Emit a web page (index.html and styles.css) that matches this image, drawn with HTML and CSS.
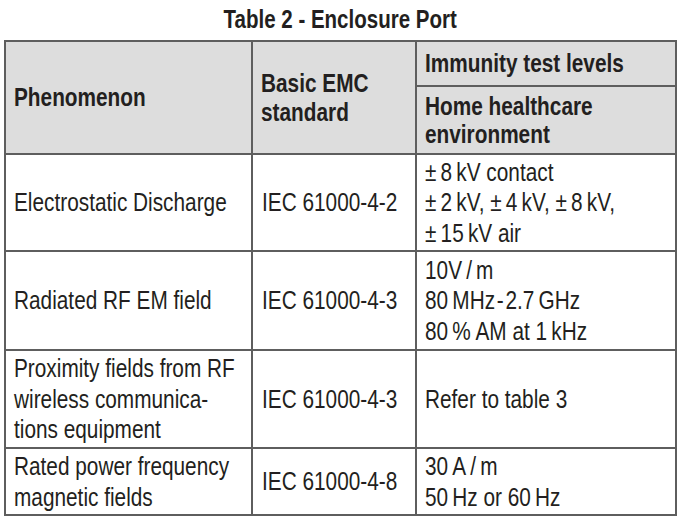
FILE: index.html
```html
<!DOCTYPE html>
<html lang="en">
<head>
<meta charset="utf-8">
<title>Table 2 - Enclosure Port</title>
<link rel="stylesheet" href="styles.css">
</head>
<body>
<div class="page">
  <h1 class="title"><span class="tt">Table 2 - Enclosure Port</span></h1>
  <table class="emc">
    <colgroup>
      <col class="c1"><col class="c2"><col class="c3">
    </colgroup>
    <thead>
      <tr class="h1">
        <th rowspan="2"><span class="t">Phenomenon</span></th>
        <th rowspan="2"><span class="t">Basic EMC<br>standard</span></th>
        <th><span class="t">Immunity test levels</span></th>
      </tr>
      <tr class="h2">
        <th><span class="t">Home healthcare<br>environment</span></th>
      </tr>
    </thead>
    <tbody>
      <tr class="r1">
        <td><span class="t">Electrostatic Discharge</span></td>
        <td><span class="t">IEC 61000-4-2</span></td>
        <td><span class="t">±&#8201;8&#8201;kV contact<br>±&#8201;2&#8201;kV, ±&#8201;4&#8201;kV, ±&#8201;8&#8201;kV,<br>±&#8201;15&#8201;kV air</span></td>
      </tr>
      <tr class="r2">
        <td><span class="t">Radiated RF EM field</span></td>
        <td><span class="t">IEC 61000-4-3</span></td>
        <td><span class="t">10V&#8201;/&#8201;m<br>80&#8201;MHz&#8202;-&#8202;2.7&#8201;GHz<br>80&#8201;% AM at 1&#8201;kHz</span></td>
      </tr>
      <tr class="r3">
        <td><span class="t">Proximity fields from RF<br>wireless communica-<br>tions equipment</span></td>
        <td><span class="t">IEC 61000-4-3</span></td>
        <td><span class="t">Refer to table 3</span></td>
      </tr>
      <tr class="r4">
        <td><span class="t">Rated power frequency<br>magnetic fields</span></td>
        <td><span class="t">IEC 61000-4-8</span></td>
        <td><span class="t">30&#8201;A&#8201;/&#8201;m<br>50&#8201;Hz or 60&#8201;Hz</span></td>
      </tr>
    </tbody>
  </table>
</div>
</body>
</html>
```
FILE: styles.css
```css
html, body {
  margin: 0;
  padding: 0;
  background: #ffffff;
}
body {
  font-family: "Liberation Sans", Arial, sans-serif;
  color: #231f20;
}
.page {
  width: 684px;
  height: 525px;
  padding: 5px 0 0 4px;
  box-sizing: border-box;
}
.title {
  margin: 0 0 7px 0;
  text-align: center;
  font-size: 25px;
  font-weight: bold;
  line-height: 28px;
  width: 673px;
  white-space: nowrap;
}
.tt {
  display: inline-block;
  transform: scaleX(0.82);
  transform-origin: 50% 50%;
}
.emc {
  border-collapse: collapse;
  width: 671px;
  table-layout: fixed;
  font-size: 26px;
}
.c1 { width: 247px; }
.c2 { width: 164px; }
.c3 { width: 260px; }
.emc th, .emc td {
  border: 2px solid #5e5e5e;
  text-align: left;
  vertical-align: middle;
  padding: 0 8px;
  line-height: 30.5px;
  white-space: nowrap;
  overflow: visible;
}
.emc th {
  background: #dddddd;
  font-weight: bold;
  line-height: 28.5px;
}
.t {
  display: inline-block;
  transform: scaleX(0.8);
  transform-origin: 0 50%;
}
.emc td:nth-child(2) { padding-left: 9px; }
.h1 { height: 45px; }
.h2 { height: 68px; }
.r1 { height: 97px; }
.r2 { height: 99px; }
.r3 { height: 98px; }
.r4 { height: 67px; }
```
